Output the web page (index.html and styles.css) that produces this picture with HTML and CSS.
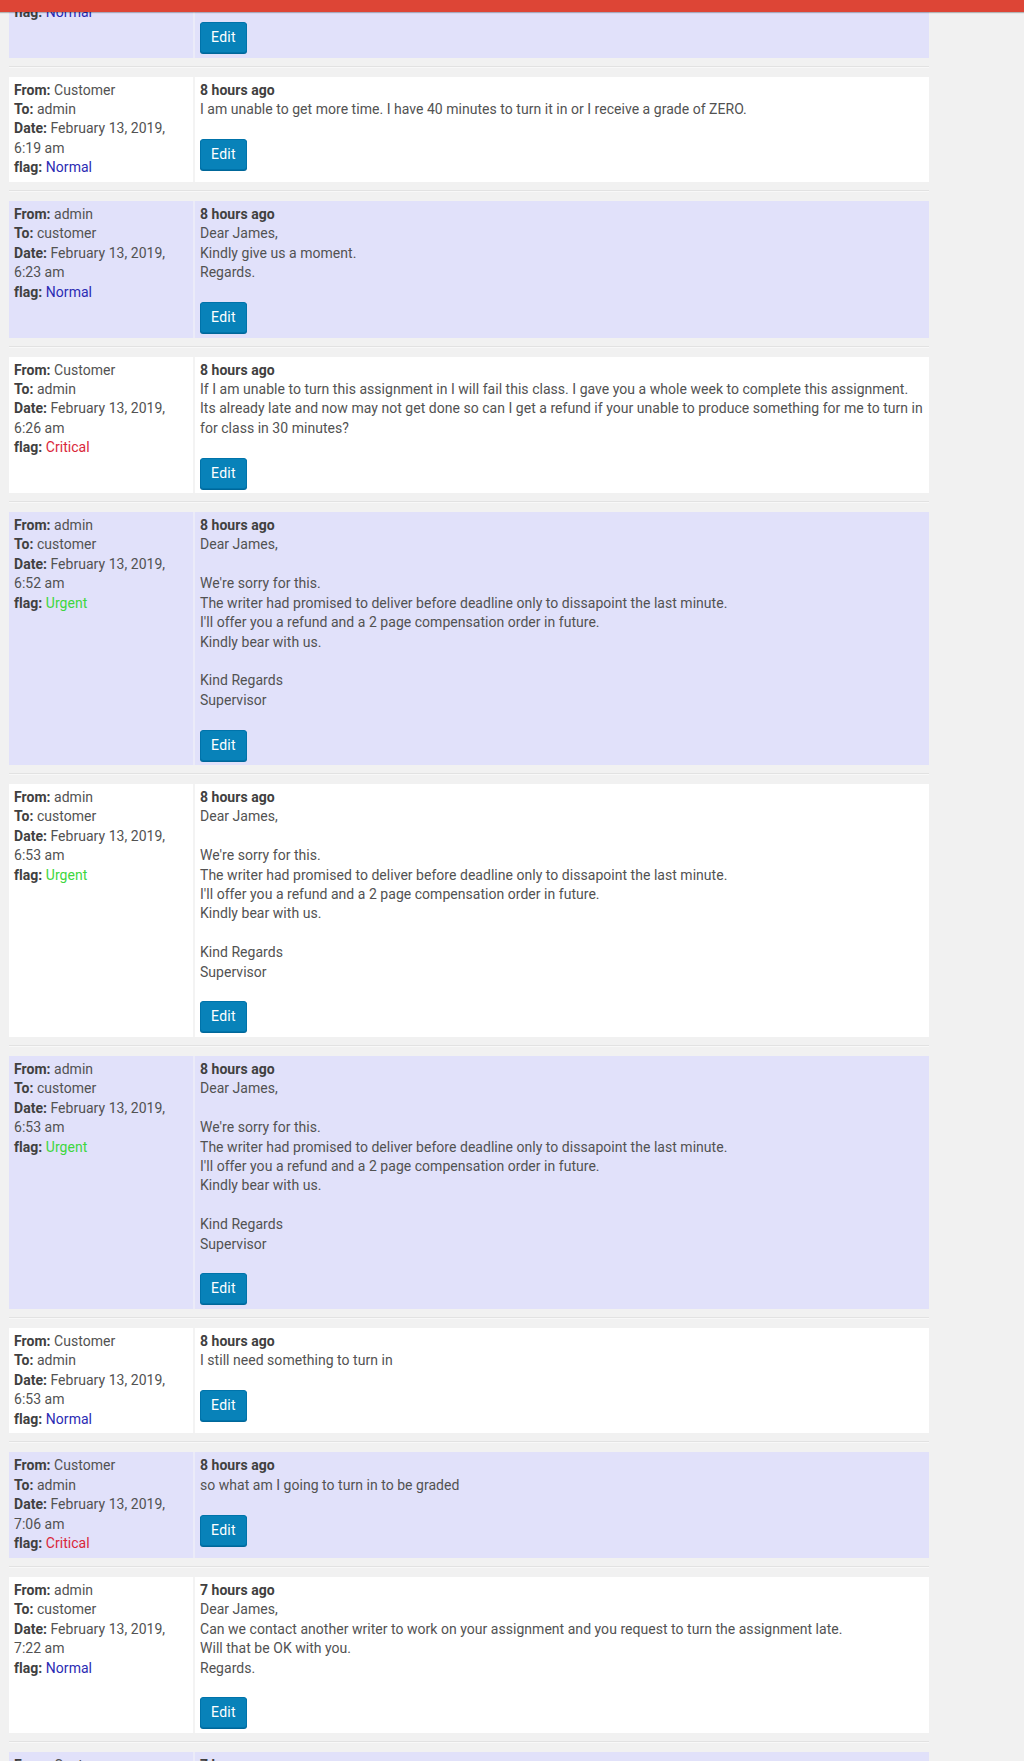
FILE: index.html
```html
<!DOCTYPE html>
<html lang="en">
<head>
  <meta charset="UTF-8">
  <title>Order messages</title>
  <link rel="stylesheet" href="styles.css">
</head>
<body>

<div class="topbar"></div>

<div class="thread">

  <div class="msg odd">
    <div class="msg-meta">
      <b>From:</b> admin<br>
      <b>To:</b> customer<br>
      <b>Date:</b> February 13, 2019, 6:17 am<br>
      <b>flag:</b> <span class="flag-normal">Normal</span>
    </div>
    <div class="msg-body">
      <b class="ago">8 hours ago</b><br>
      Dear James,<br>
      We are checking with the writer.<br>
      Regards.
      <p class="actions"><a class="button" href="#">Edit</a></p>
    </div>
  </div>
  <div class="msg-sep"></div>

  <div class="msg">
    <div class="msg-meta">
      <b>From:</b> Customer<br>
      <b>To:</b> admin<br>
      <b>Date:</b> February 13, 2019, 6:19 am<br>
      <b>flag:</b> <span class="flag-normal">Normal</span>
    </div>
    <div class="msg-body">
      <b class="ago">8 hours ago</b><br>
      I am unable to get more time. I have 40 minutes to turn it in or I receive a grade of ZERO.
      <p class="actions"><a class="button" href="#">Edit</a></p>
    </div>
  </div>
  <div class="msg-sep"></div>

  <div class="msg odd">
    <div class="msg-meta">
      <b>From:</b> admin<br>
      <b>To:</b> customer<br>
      <b>Date:</b> February 13, 2019, 6:23 am<br>
      <b>flag:</b> <span class="flag-normal">Normal</span>
    </div>
    <div class="msg-body">
      <b class="ago">8 hours ago</b><br>
      Dear James,<br>
      Kindly give us a moment.<br>
      Regards.
      <p class="actions"><a class="button" href="#">Edit</a></p>
    </div>
  </div>
  <div class="msg-sep"></div>

  <div class="msg">
    <div class="msg-meta">
      <b>From:</b> Customer<br>
      <b>To:</b> admin<br>
      <b>Date:</b> February 13, 2019, 6:26 am<br>
      <b>flag:</b> <span class="flag-critical">Critical</span>
    </div>
    <div class="msg-body">
      <b class="ago">8 hours ago</b><br>
      If I am unable to turn this assignment in I will fail this class. I gave you a whole week to complete this assignment. Its already late and now may not get done so can I get a refund if your unable to produce something for me to turn in for class in 30 minutes?
      <p class="actions"><a class="button" href="#">Edit</a></p>
    </div>
  </div>
  <div class="msg-sep"></div>

  <div class="msg odd">
    <div class="msg-meta">
      <b>From:</b> admin<br>
      <b>To:</b> customer<br>
      <b>Date:</b> February 13, 2019, 6:52 am<br>
      <b>flag:</b> <span class="flag-urgent">Urgent</span>
    </div>
    <div class="msg-body">
      <b class="ago">8 hours ago</b><br>
      Dear James,<br>
      <br>
      We're sorry for this.<br>
      The writer had promised to deliver before deadline only to dissapoint the last minute.<br>
      I'll offer you a refund and a 2 page compensation order in future.<br>
      Kindly bear with us.<br>
      <br>
      Kind Regards<br>
      Supervisor
      <p class="actions"><a class="button" href="#">Edit</a></p>
    </div>
  </div>
  <div class="msg-sep"></div>

  <div class="msg">
    <div class="msg-meta">
      <b>From:</b> admin<br>
      <b>To:</b> customer<br>
      <b>Date:</b> February 13, 2019, 6:53 am<br>
      <b>flag:</b> <span class="flag-urgent">Urgent</span>
    </div>
    <div class="msg-body">
      <b class="ago">8 hours ago</b><br>
      Dear James,<br>
      <br>
      We're sorry for this.<br>
      The writer had promised to deliver before deadline only to dissapoint the last minute.<br>
      I'll offer you a refund and a 2 page compensation order in future.<br>
      Kindly bear with us.<br>
      <br>
      Kind Regards<br>
      Supervisor
      <p class="actions"><a class="button" href="#">Edit</a></p>
    </div>
  </div>
  <div class="msg-sep"></div>

  <div class="msg odd">
    <div class="msg-meta">
      <b>From:</b> admin<br>
      <b>To:</b> customer<br>
      <b>Date:</b> February 13, 2019, 6:53 am<br>
      <b>flag:</b> <span class="flag-urgent">Urgent</span>
    </div>
    <div class="msg-body">
      <b class="ago">8 hours ago</b><br>
      Dear James,<br>
      <br>
      We're sorry for this.<br>
      The writer had promised to deliver before deadline only to dissapoint the last minute.<br>
      I'll offer you a refund and a 2 page compensation order in future.<br>
      Kindly bear with us.<br>
      <br>
      Kind Regards<br>
      Supervisor
      <p class="actions"><a class="button" href="#">Edit</a></p>
    </div>
  </div>
  <div class="msg-sep"></div>

  <div class="msg">
    <div class="msg-meta">
      <b>From:</b> Customer<br>
      <b>To:</b> admin<br>
      <b>Date:</b> February 13, 2019, 6:53 am<br>
      <b>flag:</b> <span class="flag-normal">Normal</span>
    </div>
    <div class="msg-body">
      <b class="ago">8 hours ago</b><br>
      I still need something to turn in
      <p class="actions"><a class="button" href="#">Edit</a></p>
    </div>
  </div>
  <div class="msg-sep"></div>

  <div class="msg odd">
    <div class="msg-meta">
      <b>From:</b> Customer<br>
      <b>To:</b> admin<br>
      <b>Date:</b> February 13, 2019, 7:06 am<br>
      <b>flag:</b> <span class="flag-critical">Critical</span>
    </div>
    <div class="msg-body">
      <b class="ago">8 hours ago</b><br>
      so what am I going to turn in to be graded
      <p class="actions"><a class="button" href="#">Edit</a></p>
    </div>
  </div>
  <div class="msg-sep"></div>

  <div class="msg">
    <div class="msg-meta">
      <b>From:</b> admin<br>
      <b>To:</b> customer<br>
      <b>Date:</b> February 13, 2019, 7:22 am<br>
      <b>flag:</b> <span class="flag-normal">Normal</span>
    </div>
    <div class="msg-body">
      <b class="ago">7 hours ago</b><br>
      Dear James,<br>
      Can we contact another writer to work on your assignment and you request to turn the assignment late.<br>
      Will that be OK with you.<br>
      Regards.
      <p class="actions"><a class="button" href="#">Edit</a></p>
    </div>
  </div>
  <div class="msg-sep"></div>

  <div class="msg odd">
    <div class="msg-meta">
      <b>From:</b> Customer<br>
      <b>To:</b> admin<br>
      <b>Date:</b> February 13, 2019, 7:31 am<br>
      <b>flag:</b> <span class="flag-normal">Normal</span>
    </div>
    <div class="msg-body">
      <b class="ago">7 hours ago</b><br>
      ok
      <p class="actions"><a class="button" href="#">Edit</a></p>
    </div>
  </div>

</div>

</body>
</html>
```

FILE: styles.css
```css
body {
  margin: 0;
  background: #f1f1f1;
  color: #525252;
  font-family: Roboto, "Liberation Sans", sans-serif;
  font-size: 14px;
  line-height: 19.4px;
  letter-spacing: 0.03px;
}

/* admin bar stays on top while the thread scrolls under it */
.topbar {
  position: fixed;
  top: 0;
  left: 0;
  right: 0;
  height: 12px;
  background: #dd4536;
  box-shadow: 0 1px 1px rgba(0, 0, 0, 0.25);
  z-index: 10;
}

/* page is scrolled down a bit, first message sits under the bar */
.thread {
  width: 920px;
  margin: -79px 0 0 9px;
}

.msg {
  display: flex;
  gap: 2px;
  background: #f3f3f3;
}

.msg.odd {
  background: #ebebf8;
}

.msg-meta,
.msg-body {
  background: #fff;
  padding: 4px 5px;
}

.msg.odd .msg-meta,
.msg.odd .msg-body {
  background: #e1e1fa;
}

.msg-meta {
  width: 174px;
  flex: none;
  padding-bottom: 4.5px;
}

.msg-meta b,
.ago {
  color: #404040;
}

.msg-body {
  flex: 1;
  padding: 4px 4px 4.5px 5px;
}

.flag-normal {
  color: #2b2bb3;
}

.flag-critical {
  color: #d9263a;
}

.flag-urgent {
  color: #3ed63e;
}

.actions {
  margin: 19.4px 0 0;
  line-height: 0;
}

.button {
  display: inline-block;
  box-sizing: border-box;
  height: 31px;
  line-height: 29px;
  padding: 0 10px;
  border: 1px solid #0073aa;
  border-radius: 3px;
  background: #0882b9;
  box-shadow: 0 1px 0 #006799;
  color: #fff;
  font-size: 14px;
  letter-spacing: 0.3px;
  text-decoration: none;
}

.msg-sep {
  margin: 8px 0 9px;
  border-top: 1px solid #e2e2e2;
  border-bottom: 1px solid #f8f8f8;
}
```
